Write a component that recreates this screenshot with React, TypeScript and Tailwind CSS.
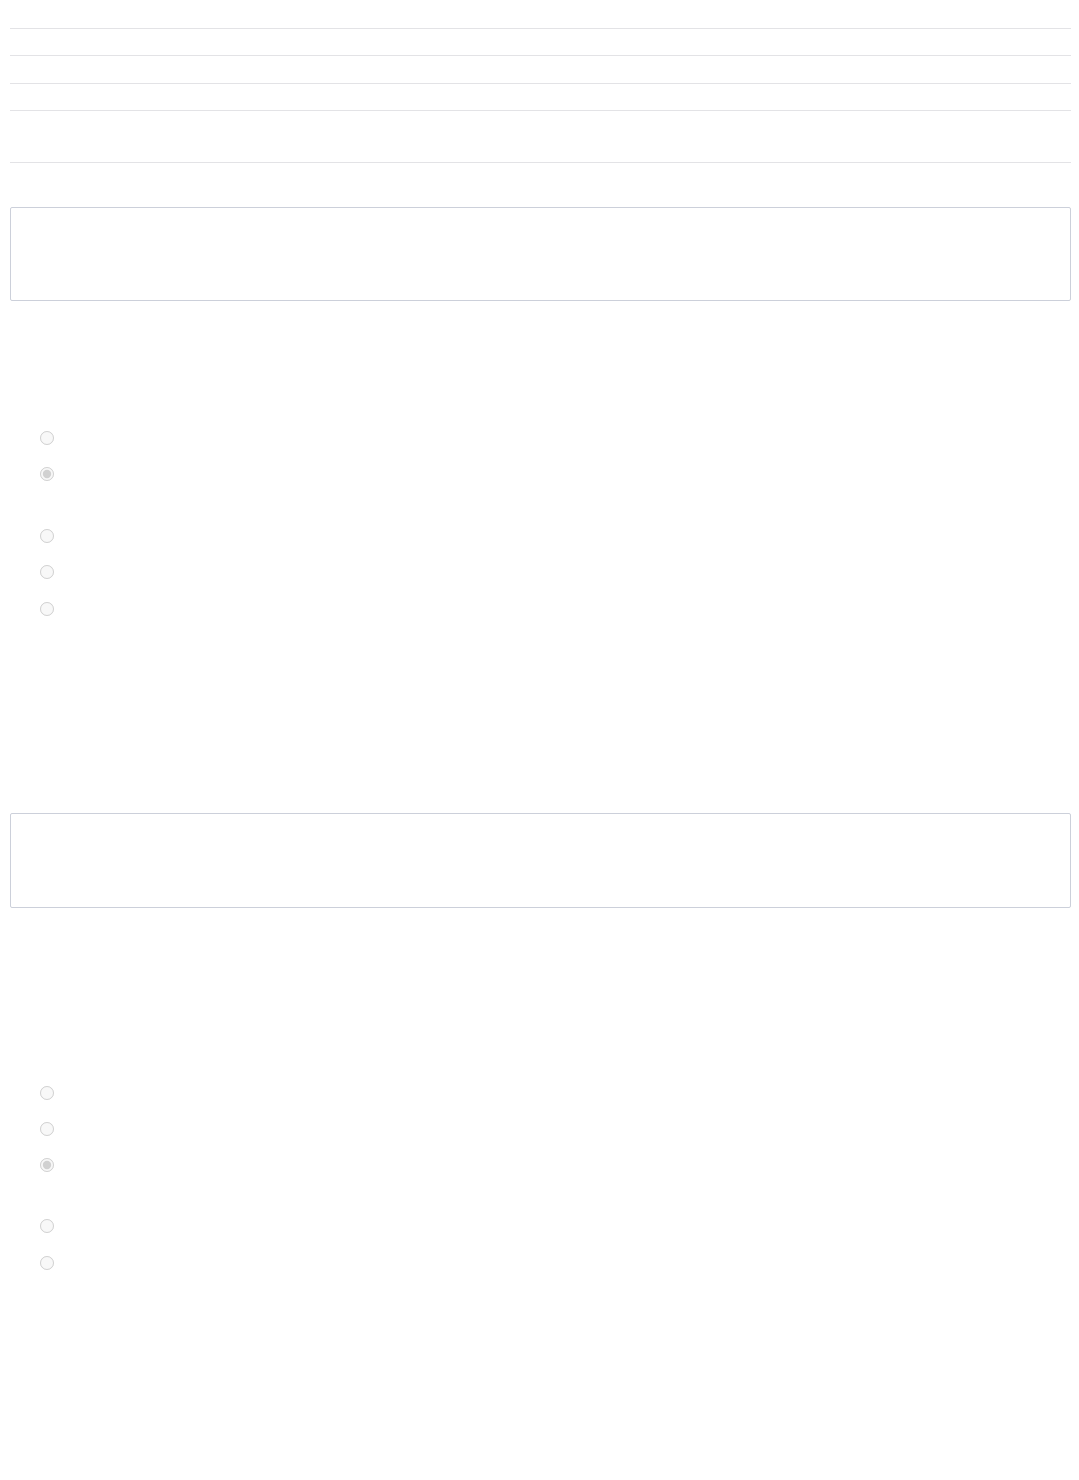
import React from "react";

const rowHeights = [27, 28, 27, 52];

function RadioGroup({ checked, gaps }: { checked: number; gaps: number[] }) {
  return (
    <div className="flex flex-col pl-[30px]">
      {gaps.map((g, i) => (
        <label key={i} className="flex h-[14px] items-center" style={{ marginTop: g }}>
          <input
            type="radio"
            disabled
            readOnly
            checked={i === checked}
            className="m-0 h-[14px] w-[14px]"
          />
          <span className="ml-2 text-sm text-white"></span>
        </label>
      ))}
    </div>
  );
}

export default function App() {
  return (
    <main className="min-h-[1480px] bg-white px-[10px] pt-[28px] font-['Liberation_Sans',sans-serif]">
      <div className="w-[1061px] border-b border-[#e3e3e6]">
        {rowHeights.map((h, i) => (
          <div key={i} className="border-t border-[#e3e3e6]" style={{ height: h }} />
        ))}
      </div>

      <div className="mt-[44px] h-[94px] w-[1061px] rounded-[2px] border border-[#ccd0da]" />

      <RadioGroup checked={1} gaps={[130, 22, 48, 22, 23]} />

      <div className="mt-[197px] h-[95px] w-[1061px] rounded-[2px] border border-[#ccd0da]" />

      <RadioGroup checked={2} gaps={[178, 22, 22, 47, 23]} />
    </main>
  );
}
